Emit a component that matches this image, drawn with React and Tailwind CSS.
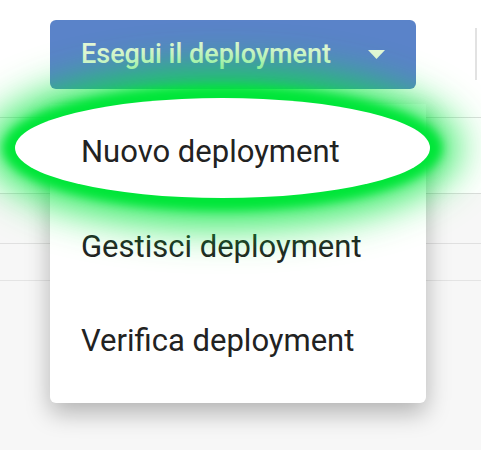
export default function App() {
  const font = { fontFamily: 'Roboto, "Noto Sans", sans-serif' }

  return (
    <div className="relative w-[481px] h-[450px] overflow-hidden bg-[#f7f7f7]" style={font}>
      {/* background rows */}
      <div className="flex flex-col">
        <div className="h-[118px] bg-white border-b border-[#dedede] flex items-start">
          <div className="pl-[50px] pt-[20px]">
            <button className="w-[366px] h-[69px] rounded-md bg-[#5a83c9] flex items-center justify-between pl-[31px] pr-[31px] text-[#e6f7d8] text-[27px] font-medium">
              <span>Esegui il deployment</span>
              <svg width="17" height="9" viewBox="0 0 17 9">
                <path d="M0 0 H17 L8.5 9 Z" fill="#e6f7d8" />
              </svg>
            </button>
          </div>
          <div className="ml-auto mr-[4px] mt-[28px] w-[2px] h-[52px] bg-[#e2e2e2]" />
        </div>
        <div className="h-[76px] bg-white border-b border-[#dcdcdc]" />
        <div className="h-[50px] border-b border-[#e0e0e0]" />
        <div className="h-[37px] border-b border-[#e4e4e4]" />
      </div>

      {/* dropdown menu */}
      <div className="absolute left-[50px] top-[104px] w-[376px] h-[299px] bg-white rounded-b-md shadow-[0_10px_24px_rgba(0,0,0,0.28)] flex flex-col text-[31px] text-[#222]">
        <div className="h-[96px] flex items-center pl-[31px]">
          <span className="relative z-20">Nuovo deployment</span>
        </div>
        <div className="h-[94px] flex items-center pl-[31px]">Gestisci deployment</div>
        <div className="h-[94px] flex items-center pl-[31px]">Verifica deployment</div>
      </div>

      {/* highlight glow */}
      <div className="absolute z-10 left-[15px] top-[98px] w-[415px] h-[100px] rounded-[50%] bg-white shadow-[0_0_10px_12px_#00e639,0_0_40px_28px_rgba(0,230,60,0.85)] pointer-events-none" />
    </div>
  )
}
